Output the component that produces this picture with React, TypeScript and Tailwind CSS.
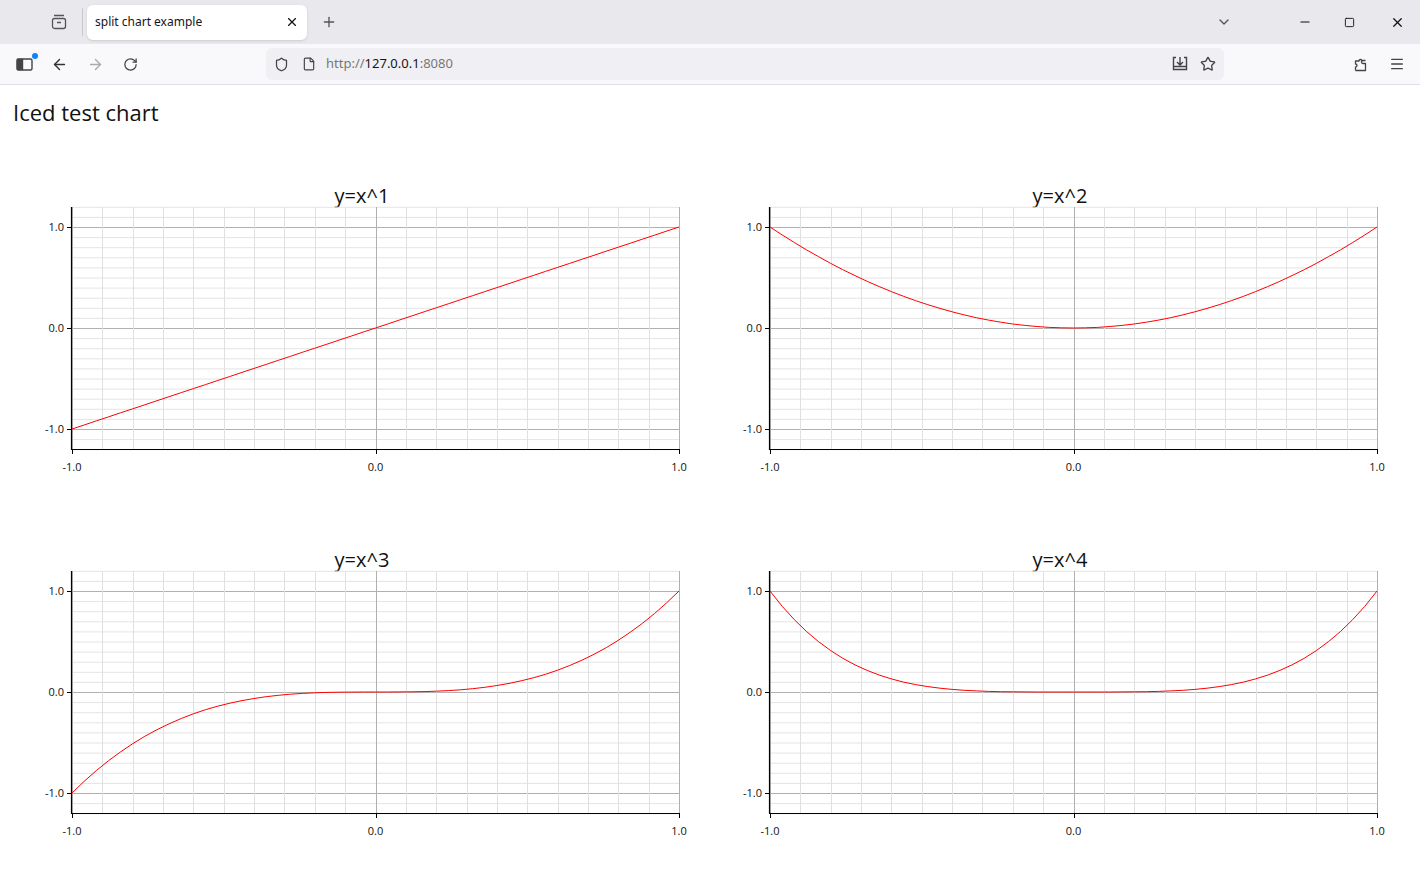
import { ArrowLeft, ArrowRight, RotateCw, Shield, File, Star, Menu, X, Plus, ChevronDown, Minus, Square } from 'lucide-react'

const charts = [
  { title: 'y=x^1', f: (x: number) => x },
  { title: 'y=x^2', f: (x: number) => x * x },
  { title: 'y=x^3', f: (x: number) => x * x * x },
  { title: 'y=x^4', f: (x: number) => x ** 4 },
]

const X0 = 72
const X1 = 679
const sx = (x: number) => X0 + ((x + 1) / 2) * (X1 - X0)
const sy = (y: number) => 158 - y * 101

function Chart({ title, f }: { title: string; f: (x: number) => number }) {
  const vlines = Array.from({ length: 21 }, (_, i) => -1 + i * 0.1)
  const hlines = Array.from({ length: 25 }, (_, i) => -1.2 + i * 0.1)
  const pts = Array.from({ length: 51 }, (_, i) => {
    const x = -1 + i * 0.04
    return `${sx(x).toFixed(1)},${sy(f(x)).toFixed(1)}`
  }).join(' ')
  const font = { fontFamily: "'Open Sans', 'Noto Sans', sans-serif" }
  return (
    <svg width={698} height={364} className="block" style={font}>
      <text x={362} y={33} fontSize={20} textAnchor="middle" fill="#111">{title}</text>
      {hlines.map((y, i) => (
        <line key={'h' + i} x1={X0} x2={X1} y1={sy(y) + 0.5} y2={sy(y) + 0.5}
          stroke={Math.abs(Math.round(y * 10)) % 10 === 0 ? '#b0b0b0' : '#e4e4e4'} />
      ))}
      {vlines.map((x, i) => (
        <line key={'v' + i} y1={37} y2={279} x1={Math.round(sx(x)) + 0.5} x2={Math.round(sx(x)) + 0.5}
          stroke={i % 10 === 0 ? '#b0b0b0' : '#e0e0e0'} />
      ))}
      <line x1={X0 - 0.5} x2={X0 - 0.5} y1={37} y2={280} stroke="#000" strokeWidth={1.2} />
      <line x1={X0 - 1} x2={X1 + 1} y1={279.5} y2={279.5} stroke="#000" strokeWidth={1.2} />
      {[1, 0, -1].map(v => (
        <g key={'yt' + v}>
          <line x1={X0 - 5} x2={X0} y1={sy(v) + 0.5} y2={sy(v) + 0.5} stroke="#000" />
          <text x={X0 - 8} y={sy(v) + 4} fontSize={11} textAnchor="end" fill="#111">{v.toFixed(1)}</text>
        </g>
      ))}
      {[-1, 0, 1].map(v => (
        <g key={'xt' + v}>
          <line y1={279} y2={284} x1={Math.round(sx(v)) + 0.5} x2={Math.round(sx(v)) + 0.5} stroke="#000" />
          <text x={sx(v)} y={301} fontSize={11} textAnchor="middle" fill="#111">{v.toFixed(1)}</text>
        </g>
      ))}
      <polyline points={pts} fill="none" stroke="#ff0000" strokeWidth={1} />
    </svg>
  )
}

export default function App() {
  return (
    <div className="w-[1420px] h-[883px] bg-white overflow-hidden" style={{ fontFamily: "'Segoe UI', 'Noto Sans', sans-serif" }}>
      <div className="h-[44px] bg-[#e9e9ed] flex items-center">
        <div className="w-[83px] h-[28px] flex items-center justify-end pr-[15px] border-r border-[#c8c8cc]">
          <svg width="16" height="16" viewBox="0 0 16 16" fill="none" stroke="#555" strokeWidth="1.3">
            <rect x="1.5" y="4.5" width="13" height="10" rx="2" />
            <path d="M3 1.5h10M6 8.5h4" />
          </svg>
        </div>
        <div className="ml-[4px] w-[220px] h-[35px] bg-white rounded-md shadow-sm flex items-center px-2 justify-between">
          <span className="text-[12px] text-[#15141a]">split chart example</span>
          <X size={14} strokeWidth={2} className="text-[#15141a]" />
        </div>
        <Plus size={16} className="ml-[14px] text-[#555]" />
        <div className="flex-1" />
        <ChevronDown size={16} className="text-[#555] mr-[66px]" />
        <Minus size={14} className="text-[#111] mr-[32px]" />
        <Square size={11} className="text-[#111] mr-[35px]" />
        <X size={15} className="text-[#111] mr-[15px]" />
      </div>
      <div className="h-[41px] bg-[#f9f9fb] border-b border-[#e0e0e6] flex items-center">
        <div className="w-[50px] flex justify-center relative">
          <svg width="18" height="16" viewBox="0 0 18 16" fill="none" stroke="#444" strokeWidth="1.4">
            <rect x="1" y="3" width="15" height="11" rx="1.5" />
            <rect x="1.5" y="3.5" width="5" height="10" fill="#444" />
          </svg>
          <span className="absolute top-[-3px] right-[12px] w-[6px] h-[6px] rounded-full bg-[#0a84ff]" />
        </div>
        <ArrowLeft size={17} className="text-[#333] ml-[1px]" />
        <ArrowRight size={17} className="text-[#aaa] ml-[19px]" />
        <RotateCw size={15} className="text-[#444] ml-[19px]" />
        <div className="ml-[128px] w-[958px] h-[32px] bg-[#f0f0f4] rounded-md flex items-center px-[8px]">
          <Shield size={15} className="text-[#444]" />
          <File size={14} className="text-[#444] ml-[13px]" />
          <span className="ml-[10px] text-[13px] text-[#777]">http://<span className="text-[#15141a]">127.0.0.1</span>:8080</span>
          <div className="flex-1" />
          <svg width="18" height="16" viewBox="0 0 18 16" fill="none" stroke="#444" strokeWidth="1.4">
            <path d="M5 1.5H2.5v12h13v-12H13M9 1v8M6 6l3 3 3-3M2.5 10.5h13" />
          </svg>
          <Star size={16} className="text-[#444] ml-[11px]" />
        </div>
        <div className="flex-1" />
        <svg width="16" height="16" viewBox="0 0 16 16" fill="none" stroke="#444" strokeWidth="1.3" strokeLinejoin="round" className="mr-[20px]">
          <path d="M2.5 14.5h10v-7h-2.5a1.5 1.5 0 1 1 0-3h2.5v-0a0 0 0 0 0 0 0M2.5 14.5v-3.5a1.5 1.5 0 1 0 0-3v-3h3.5a1.5 1.5 0 1 1 3 0" />
        </svg>
        <Menu size={16} className="text-[#444] mr-[15px]" />
      </div>
      <div className="pl-[13px] pt-[13px] text-[22px] text-[#111] leading-[28px]" style={{ fontFamily: "'Open Sans', 'Noto Sans', sans-serif" }}>
        Iced test chart
      </div>
      <div className="mt-[44px] grid grid-cols-[698px_698px]">
        {charts.map(c => <Chart key={c.title} title={c.title} f={c.f} />)}
      </div>
    </div>
  )
}
